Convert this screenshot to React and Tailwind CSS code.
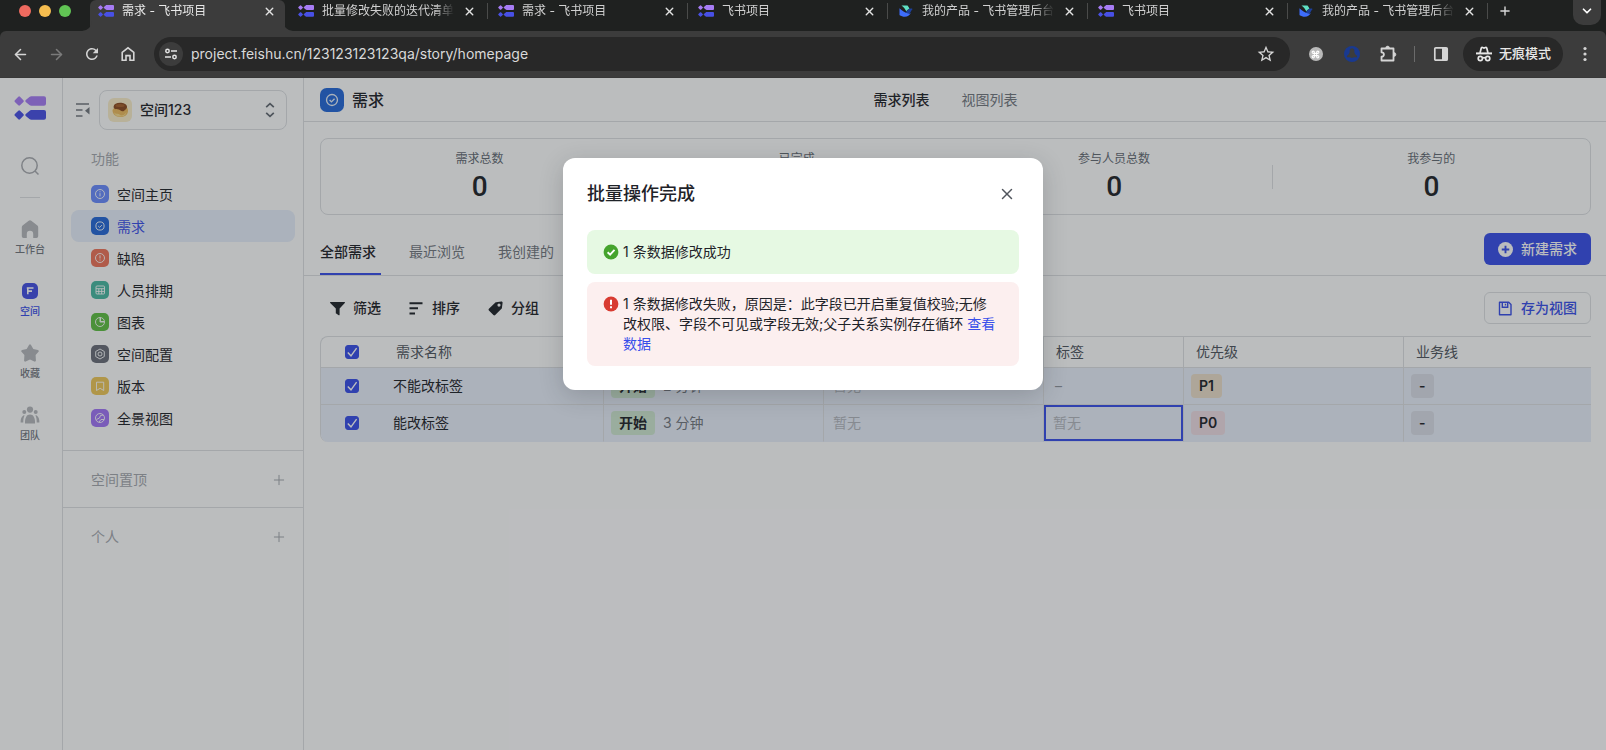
import React from "react";
import { ArrowLeft, ArrowRight, ChevronDown, Command, Plus, X } from "lucide-react";
import { MdRefresh, MdStarBorder } from "react-icons/md";

/* ---------- logos ---------- */

function ProjectLogo({ className }) {
  return (
    <svg viewBox="0 0 32 24" className={className} aria-hidden="true">
      <g fill="#a77cf5">
        <path d="M4.300.8a1.200 1.200 0 0 1 1.700 0l3.400 3.400a1.200 1.200 0 0 1 0 1.700L6 9.300a1.200 1.200 0 0 1-1.700 0L.9 5.900a1.200 1.200 0 0 1 0-1.700z" />
        <path d="M15.400 1c.6-.5 1.200-.8 2-.8H30a2 2 0 0 1 2 2v5.600a2 2 0 0 1-2 2H17.400c-.8 0-1.400-.3-2-.8l-3.600-3a1.200 1.200 0 0 1 0-1.900z" />
      </g>
      <g fill="#4850e6" transform="translate(0 13.900)">
        <path d="M4.300.8a1.200 1.200 0 0 1 1.700 0l3.400 3.400a1.200 1.200 0 0 1 0 1.700L6 9.300a1.200 1.200 0 0 1-1.700 0L.9 5.900a1.200 1.200 0 0 1 0-1.700z" />
        <path d="M15.400 1c.6-.5 1.200-.8 2-.8H30a2 2 0 0 1 2 2v5.600a2 2 0 0 1-2 2H17.400c-.8 0-1.400-.3-2-.8l-3.600-3a1.200 1.200 0 0 1 0-1.900z" />
      </g>
    </svg>
  );
}

function FeishuLogo({ className }) {
  return (
    <svg viewBox="0 0 14 14" className={className} aria-hidden="true">
      <path d="M2.500 1.500h6c1 1 1.700 2.300 2 3.600-1.400.3-2.300 1.200-3.200 2.200C6.200 5 4.600 3 2.500 1.500z" fill="#5fe0c4" />
      <path d="M13.600 4.900c-1.600-.6-3.500-.2-4.800 1L6.500 8.200l3 1.600c1.200-.3 1.900-1.200 2.400-2.300.4-1 .9-1.900 1.700-2.600z" fill="#1c3f9c" />
      <path d="M.5 4.300C3 6.900 6 8.800 9.400 9.600c1 .2 1.800 0 2.500-.5-1.300 2.300-3.400 3.700-6 3.700-2 0-3.900-.6-5.200-1.500-.2-.2-.2-.4-.2-.6z" fill="#3d6dfc" />
    </svg>
  );
}

/* ---------- browser chrome ---------- */

const browserTabs = [
  { title: "需求 - 飞书项目", kind: "project", active: true },
  { title: "批量修改失败的迭代清单", kind: "project" },
  { title: "需求 - 飞书项目", kind: "project" },
  { title: "飞书项目", kind: "project" },
  { title: "我的产品 - 飞书管理后台", kind: "admin" },
  { title: "飞书项目", kind: "project" },
  { title: "我的产品 - 飞书管理后台", kind: "admin" },
];

function Flare({ side }) {
  return (
    <svg
      viewBox="0 0 10 10"
      className={side === "left" ? "absolute bottom-0 -left-2 h-2.5 w-2.5" : "absolute -right-2 bottom-0 h-2.5 w-2.5 -scale-x-100"}
      aria-hidden="true"
    >
      <path d="M10 0v10H0A10 10 0 0 0 10 0z" fill="#3c3c3c" />
    </svg>
  );
}

function BrowserTab({ tab, divider }) {
  return (
    <div className="relative h-[31px] max-w-[200px] min-w-0 flex-1">
      {tab.active && (
        <div className="absolute inset-y-0 right-[3px] left-0.5 rounded-t-md bg-[#3c3c3c]">
          <Flare side="left" />
          <Flare side="right" />
        </div>
      )}
      <div className="relative flex h-[22px] items-center pr-3 pl-2.5">
        {tab.kind === "project" ? (
          <ProjectLogo className="h-3 w-4 shrink-0" />
        ) : (
          <FeishuLogo className="h-3.5 w-4 shrink-0" />
        )}
        <button
          className={
            "ml-2 min-w-0 flex-1 overflow-hidden text-left text-xs leading-5 whitespace-nowrap [mask-image:linear-gradient(to_right,black_84%,transparent_98%)] " +
            (tab.active ? "text-[#e8e8e8]" : "text-[#d0d0d0]")
          }
        >
          {tab.title}
        </button>
        <button aria-label="关闭标签页" className="ml-1.5 shrink-0 text-[#e3e3e3]">
          <X size={13} strokeWidth={2.600} />
        </button>
      </div>
      {divider && <div className="absolute top-[3px] right-0 h-4 w-px bg-[#4a4b4a]" />}
    </div>
  );
}

function BrowserChrome() {
  return (
    <header className="bg-[#1f2120]">
      <div className="flex h-[31px] items-start overflow-hidden pr-[5px] pl-[19px]">
        <div className="flex h-[22px] w-[69px] shrink-0 items-center gap-2">
          <span className="h-3 w-3 rounded-full bg-[#ee6a5f]" />
          <span className="h-3 w-3 rounded-full bg-[#f5bd4f]" />
          <span className="h-3 w-3 rounded-full bg-[#61c454]" />
        </div>
        <div className="flex min-w-0 flex-1">
          {browserTabs.map((tab, i) => (
            <BrowserTab key={i} tab={tab} divider={i > 0} />
          ))}
          <button aria-label="新标签页" className="ml-[7px] flex h-[22px] w-5 shrink-0 items-center justify-center text-[#d8d8d8]">
            <Plus size={14} strokeWidth={2.400} />
          </button>
        </div>
        <button aria-label="搜索标签页" className="flex h-[25px] w-7 shrink-0 justify-center rounded-b-[10px] bg-[#3c3c3c] pt-1 text-white">
          <ChevronDown size={14} strokeWidth={3} />
        </button>
      </div>
      <div className="flex h-[47px] items-center rounded-t-md border-b border-[#383838] bg-[#3c3c3c] pr-[11px] pl-2.5 text-[#d5d5d5]">
        <div className="flex items-center gap-4">
          <button aria-label="后退" className="flex w-5 justify-center"><ArrowLeft size={17} strokeWidth={2.200} /></button>
          <button aria-label="前进" className="flex w-5 justify-center text-[#7b7b7b]"><ArrowRight size={17} strokeWidth={2.200} /></button>
          <button aria-label="刷新" className="flex w-5 justify-center"><MdRefresh size={18} /></button>
          <button aria-label="主页" className="flex w-5 justify-center">
            <svg viewBox="0 0 16 16" width="16" height="16" fill="none" stroke="currentColor" strokeWidth="1.600" aria-hidden="true">
              <path d="M2.200 6.300 8 1.800l5.800 4.500v8H10V9.600H6v4.700H2.200z" />
            </svg>
          </button>
        </div>
        <div className="ml-4 flex h-[34px] min-w-0 flex-1 items-center rounded-full bg-[#282828] pr-3.5 pl-[5px]">
          <button aria-label="查看网站信息" className="flex h-6 w-6 shrink-0 items-center justify-center rounded-full bg-[#3c3c3c]">
            <svg viewBox="0 0 14 14" width="14" height="14" fill="none" stroke="#e3e3e3" strokeWidth="1.500" aria-hidden="true">
              <circle cx="3.500" cy="4" r="1.700" />
              <path d="M7 4h6M1 10h6" />
              <circle cx="10.500" cy="10" r="1.700" />
            </svg>
          </button>
          <input
            type="text"
            aria-label="地址和搜索栏"
            defaultValue="project.feishu.cn/123123123123qa/story/homepage"
            className="ml-2 min-w-0 flex-1 bg-transparent text-sm text-[#d9d9d9] outline-none"
          />
          <button aria-label="收藏此页"><MdStarBorder size={20} /></button>
        </div>
        <div className="flex items-center pl-4">
          <button aria-label="快捷键扩展" className="flex w-5 justify-center">
            <span className="flex h-3.5 w-3.5 items-center justify-center rounded-full bg-[#b9b9b9] text-white">
              <Command size={9} strokeWidth={2.800} />
            </span>
          </button>
          <button aria-label="网络扩展" className="ml-4 flex w-5 justify-center">
            <svg viewBox="0 0 16 16" width="16" height="16" aria-hidden="true">
              <circle cx="8" cy="8" r="8" fill="#19398f" />
              <path d="M8 2.200a2.400 2.400 0 0 1 2.300 3.100c.1 2 .9 3.400 2.400 4.300.8.600.3 1.900-.7 1.900-1.400-.3-2.700-.2-4 .4-1.300-.6-2.600-.7-4-.4-1 0-1.500-1.300-.7-1.900 1.500-.9 2.300-2.300 2.400-4.300A2.400 2.400 0 0 1 8 2.200z" fill="#3c3c3c" />
            </svg>
          </button>
          <button aria-label="扩展程序" className="ml-4 flex w-5 justify-center">
            <svg viewBox="0 0 18 18" width="18" height="18" fill="none" stroke="currentColor" strokeWidth="1.800" strokeLinejoin="round" aria-hidden="true">
              <path d="M2.500 3.500h12v12h-12v-3.800c1.500 0 2.400-.9 2.400-2.200s-.9-2.200-2.400-2.200z" />
              <path d="M6.700 3a1.900 1.900 0 0 1 3.800 0zM15 7.600a1.900 1.900 0 0 1 0 3.800z" fill="currentColor" strokeWidth=".6" />
            </svg>
          </button>
          <span className="ml-4 h-4 w-px bg-[#6b6b6b]" />
          <button aria-label="侧边栏" className="ml-4 flex w-5 justify-center">
            <svg viewBox="0 0 16 16" width="16" height="16" aria-hidden="true">
              <rect x="1.800" y="1.800" width="12.400" height="12.400" rx="1" fill="none" stroke="currentColor" strokeWidth="1.700" />
              <path d="M9 2h5v12H9z" fill="currentColor" />
            </svg>
          </button>
          <button className="ml-3 flex h-[34px] items-center gap-1.5 rounded-full bg-[#282828] px-3 text-[13px] font-medium text-[#e8e8e8]">
            <svg viewBox="0 0 18 18" width="18" height="18" fill="none" stroke="currentColor" strokeWidth="1.700" aria-hidden="true">
              <path d="M5 8 6.200 3.200c.2-.6.700-.9 1.300-.7L9 3l1.500-.5c.6-.2 1.100.1 1.300.7L13 8" />
              <path d="M1 8.400h16" strokeWidth="2" />
              <circle cx="5.300" cy="13.500" r="2.100" />
              <circle cx="12.700" cy="13.500" r="2.100" />
              <path d="M7.400 13.100c1-.5 2.200-.5 3.200 0" />
            </svg>
            无痕模式
          </button>
          <button aria-label="更多" className="ml-3 flex w-5 justify-center">
            <svg viewBox="0 0 4 16" width="4" height="16" fill="currentColor" aria-hidden="true">
              <circle cx="2" cy="2.500" r="1.600" />
              <circle cx="2" cy="8" r="1.600" />
              <circle cx="2" cy="13.500" r="1.600" />
            </svg>
          </button>
        </div>
      </div>
    </header>
  );
}

/* ---------- icon rail ---------- */

const railIcons = {
  home: <path fill="#b6b8bc" d="M8.700.8a2 2 0 0 1 2.600 0l6.100 4.800c.5.400.8 1 .8 1.600v9a1.800 1.800 0 0 1-1.800 1.800h-3.200v-4a3.200 3.200 0 0 0-6.400 0v4H3.600a1.800 1.800 0 0 1-1.800-1.800v-9c0-.6.300-1.200.8-1.600z" />,
  space: (
    <>
      <rect x="2" y="1" width="16" height="16" rx="5" fill="#4450e4" />
      <path d="M6.800 6h6.700M8 9.100h4M7.800 6v6.200" stroke="#fff" strokeWidth="1.600" fill="none" />
    </>
  ),
  star: <path fill="#b6b8bc" d="M9 .9a1.200 1.200 0 0 1 2 0l2.300 4 4.600 1c.9.200 1.200 1.200.6 1.900L15.600 11l.3 5.400c.1.900-.8 1.500-1.600 1.100L10 15.500l-4.300 2c-.8.400-1.700-.2-1.600-1.100L4.400 11 1.500 7.800c-.6-.7-.3-1.700.6-1.900l4.600-1z" />,
  team: (
    <g fill="#b6b8bc">
      <circle cx="10" cy="3.600" r="3.100" />
      <circle cx="4.300" cy="6" r="2" />
      <circle cx="15.700" cy="6" r="2" />
      <path d="M5 17.500c-.3-5.600 1.600-9 5-9s5.300 3.400 5 9z" />
      <path d="M3.700 9.300C1.500 10.500.5 13 .6 16.600h2.700c-.1-2.900.2-5.200 1.300-7.200-.3-.1-.6-.1-.9-.1zM16.300 9.300c2.200 1.200 3.200 3.700 3.100 7.300h-2.700c.1-2.900-.2-5.200-1.300-7.200.3-.1.600-.1.900-.1z" />
    </g>
  ),
};

const railItems = [
  { label: "工作台", icon: "home" },
  { label: "空间", icon: "space", active: true },
  { label: "收藏", icon: "star" },
  { label: "团队", icon: "team" },
];

function Rail() {
  return (
    <nav className="flex w-[63px] shrink-0 flex-col items-center border-r border-[#dee0e3] pt-[18px] pr-0.5">
      <ProjectLogo className="h-6 w-8" />
      <button aria-label="搜索" className="mt-9 flex h-5 items-center">
        <svg viewBox="0 0 20 20" width="20" height="20" fill="none" stroke="#a9abb0" strokeWidth="1.500" aria-hidden="true">
          <circle cx="9.500" cy="9.500" r="7.700" />
          <path d="m15 15 3.500 3.500" />
        </svg>
      </button>
      <div className="mt-[21px] h-px w-5 bg-[#dee0e3]" />
      <div className="mt-[22px] flex flex-col items-center gap-[26px]">
        {railItems.map((item) => (
          <a key={item.label} href="#" className="flex flex-col items-center gap-1">
            <svg viewBox="0 0 20 18" className="h-[18px] w-5" aria-hidden="true">{railIcons[item.icon]}</svg>
            <span className={"text-[10px] leading-3.5 font-medium " + (item.active ? "text-[#384eea]" : "text-[#73777f]")}>{item.label}</span>
          </a>
        ))}
      </div>
    </nav>
  );
}

/* ---------- sidebar ---------- */

const glyphs = {
  info: (
    <>
      <circle cx="9" cy="9" r="4.500" />
      <path d="M9 8.200v3.200M9 6.300v1" />
    </>
  ),
  check: (
    <>
      <circle cx="9" cy="9" r="4.100" />
      <path d="m7.200 9 1.400 1.400 2.300-2.300" />
    </>
  ),
  alert: (
    <>
      <circle cx="9" cy="9" r="4.500" />
      <path d="M9 6.300v3.200M9 10.500v1" />
    </>
  ),
  table: (
    <>
      <rect x="5" y="5" width="8.500" height="8" rx="1" />
      <path d="M5 7.700h8.500M5 10.400h8.500M7.800 7.700V13M10.700 7.700V13" />
    </>
  ),
  pie: (
    <>
      <circle cx="9" cy="9" r="4.500" />
      <path d="M9 4.500V9h4.500" />
      <path d="M9.500 5v3.500h3.500" />
    </>
  ),
  gear: (
    <>
      <path d="m9 4 4.300 2.500v5L9 14l-4.300-2.500v-5z" strokeLinejoin="round" />
      <circle cx="9" cy="9" r="2" />
    </>
  ),
  bookmark: <path d="M5.500 5.200h7.200v8.300L9.100 11.300l-3.600 2.200z" strokeLinejoin="round" />,
  globe: (
    <>
      <circle cx="9" cy="9" r="4.500" />
      <path d="m5.500 10.500 3-1.500 1-2.500 2.800-.5M8 13l2-2.500h3" />
    </>
  ),
};

const features = [
  { label: "空间主页", glyph: "info", color: "#6a8cff" },
  { label: "需求", glyph: "check", color: "#2468d8", active: true },
  { label: "缺陷", glyph: "alert", color: "#f0735a" },
  { label: "人员排期", glyph: "table", color: "#48b9a2" },
  { label: "图表", glyph: "pie", color: "#5fc043" },
  { label: "空间配置", glyph: "gear", color: "#6a6e79" },
  { label: "版本", glyph: "bookmark", color: "#f0c858" },
  { label: "全景视图", glyph: "globe", color: "#a274f8" },
];

function FeatureIcon({ glyph, color, className }) {
  return (
    <svg viewBox="0 0 18 18" className={className} aria-hidden="true">
      <rect width="18" height="18" rx="5" fill={color} />
      <g fill="none" stroke="#fff" strokeOpacity=".9" strokeWidth="1">{glyphs[glyph]}</g>
    </svg>
  );
}

function Sidebar() {
  return (
    <aside className="flex w-[241px] shrink-0 flex-col border-r border-[#dee0e3]">
      <div className="flex items-center gap-2 pt-3 pr-4 pl-[13px]">
        <button aria-label="收起侧边栏">
          <svg viewBox="0 0 15 14" width="15" height="14" aria-hidden="true">
            <path d="M0 1h13M0 7h6.500M0 13h6.500" stroke="#73777f" strokeWidth="1.500" />
            <path d="M13.500 4v7.500L9 7.800z" fill="#73777f" />
          </svg>
        </button>
        <label className="flex h-10 min-w-0 flex-1 items-center rounded-lg border border-[#dee0e3] px-2">
          <svg viewBox="0 0 24 24" className="h-6 w-6 shrink-0" aria-hidden="true">
            <rect width="24" height="24" rx="6" fill="#fbeecb" />
            <path d="M4.500 12c0 4 2.800 7 7.800 7s7.700-2.600 7.700-6.500c0-2-1-3-2-4L6 10z" fill="#eebb5e" />
            <path d="M6 14c2 3 4 1 5.500 2.500S16 18 18.500 14c-1 4-3.500 4.500-6.500 4.500S6.500 17 6 14z" fill="#f8dc8c" />
            <path d="M5.600 8.500C6 6 8.500 4.800 12 4.800s6.500 1.200 7 3.700c.2 1.800-1 2.600-1.800 3.200s-1.400 1.900-2.900 1.600-2-1.500-3.500-1.900-3.500 0-4.500-.9c-.5-.4-.8-1.100-.7-2z" fill="#8c4a20" />
            <ellipse cx="12" cy="7.600" rx="4.500" ry="1.500" fill="#a8612c" />
          </svg>
          <select aria-label="选择空间" className="ml-2 min-w-0 flex-1 appearance-none bg-transparent text-sm font-medium text-[#1f2329] outline-none">
            <option>空间123</option>
          </select>
          <svg viewBox="0 0 16 16" width="16" height="16" fill="none" stroke="#646a73" strokeWidth="1.700" aria-hidden="true">
            <path d="M4.200 5.200 8 1.700l3.800 3.500M4.200 10.800 8 14.300l3.800-3.500" />
          </svg>
        </label>
      </div>
      <h2 className="mt-[18px] pl-7 text-sm leading-[22px] text-[#a5a8ae]">功能</h2>
      <ul className="mt-2 px-2 pb-4">
        {features.map((f) => (
          <li key={f.label}>
            <a
              href="#"
              className={
                "flex h-8 items-center gap-2 rounded-lg pl-5 text-sm leading-5 " +
                (f.active ? "bg-[#e8effc] text-[#384eea]" : "text-[#1f2329]")
              }
            >
              <FeatureIcon glyph={f.glyph} color={f.color} className="h-[18px] w-[18px]" />
              <span className="pt-0.5">{f.label}</span>
            </a>
          </li>
        ))}
      </ul>
      {["空间置顶", "个人"].map((name) => (
        <div key={name} className="flex h-[57px] items-center justify-between border-t border-[#dee0e3] pt-0.5 pr-4 pl-7">
          <h2 className="text-sm text-[#a5a8ae]">{name}</h2>
          <button aria-label={"添加" + name} className="text-[#a5a8ae]">
            <Plus size={16} strokeWidth={1.500} />
          </button>
        </div>
      ))}
    </aside>
  );
}

/* ---------- main content ---------- */

const stats = [
  ["需求总数", 0],
  ["已完成", 0],
  ["参与人员总数", 0],
  ["我参与的", 0],
];

const tools = [
  {
    label: "筛选",
    icon: <path d="M.6 1h13.800c.6 0 .8.7.4 1.100L9.600 7.500v6.200c0 .5-.5.8-.9.500l-2.500-1.600a.8.800 0 0 1-.4-.7V7.500L.2 2.100C-.2 1.700 0 1 .6 1z" />,
  },
  { label: "排序", icon: <path d="M.5 1.200h13v2H.5zM.5 6.300h8.500v2H.5zM.5 11.400h5.500v2H.5z" /> },
  {
    label: "分组",
    icon: <path fillRule="evenodd" d="M8.200 1.200 13.300.5c.8-.1 1.400.5 1.300 1.300l-.7 5.100c0 .3-.2.6-.4.800l-6.300 6.300a1.300 1.300 0 0 1-1.800 0L.9 9.500a1.300 1.300 0 0 1 0-1.800l6.500-6.100c.2-.2.500-.4.800-.4zM11 5.700a1.600 1.600 0 1 0 0-3.200 1.600 1.600 0 0 0 0 3.200z" />,
  },
];

const rows = [
  { name: "不能改标签", age: "2 分钟", owner: "暂无", tag: "–", priority: "P1", line: "-" },
  { name: "能改标签", age: "3 分钟", owner: "暂无", tag: "暂无", priority: "P0", line: "-", editing: true },
];

const priorityColors = { P1: "bg-[#ecdfca]", P0: "bg-[#f0dde4]" };

function CheckBox({ label }) {
  return (
    <span className="grid w-3.5 place-items-center">
      <input
        type="checkbox"
        aria-label={label}
        defaultChecked
        className="col-start-1 row-start-1 h-3.5 w-3.5 appearance-none rounded-[3px] border border-[#384eea] bg-white checked:bg-[#384eea]"
      />
      <svg viewBox="0 0 14 14" className="pointer-events-none col-start-1 row-start-1 h-3.5 w-3.5" fill="none" stroke="#fff" strokeWidth="1.400" aria-hidden="true">
        <path d="m2.800 7.400 3.200 3.400 5.600-7.600" />
      </svg>
    </span>
  );
}

function Chip({ color, children }) {
  return <span className={"inline-flex h-6 items-center rounded px-2 text-sm font-semibold text-[#1f2329] " + color}>{children}</span>;
}

function StoryTable() {
  const cell = "border-b border-l border-[#dee0e3] px-[7px] py-0";
  const head = "border-b border-l border-[#dee0e3] py-0 pr-2 pl-3 text-left font-normal";
  return (
    <div className="ml-4 overflow-hidden rounded-l-lg border-t border-l border-[#dee0e3]">
      <table className="w-full table-fixed border-separate border-spacing-0 text-sm">
        <colgroup>
          <col className="w-[62px]" />
          <col className="w-[220px]" />
          <col className="w-[220px]" />
          <col className="w-[220px]" />
          <col className="w-[140px]" />
          <col className="w-[220px]" />
          <col />
        </colgroup>
        <thead>
          <tr className="h-[31px] text-[#50555d]">
            <th className="border-b border-[#dee0e3] py-0 pr-0 pl-6"><CheckBox label="全选" /></th>
            <th className="border-b border-[#dee0e3] py-0 pr-2 pl-[13px] text-left font-normal">需求名称</th>
            <th className={head}>状态</th>
            <th className={head}>负责人</th>
            <th className={head}>标签</th>
            <th className={head}>优先级</th>
            <th className={head}>业务线</th>
          </tr>
        </thead>
        <tbody>
          {rows.map((r) => (
            <tr key={r.name} className={"h-[37px] bg-[#eaeffb] text-[#1f2329] " + (r.editing ? "[&>td]:border-b-transparent" : "")}>
              <td className="border-b border-[#dee0e3] py-0 pr-0 pl-6"><CheckBox label={r.name} /></td>
              <td className="border-b border-[#dee0e3] px-2.5 py-0">{r.name}</td>
              <td className={cell}>
                <div className="flex items-center gap-2">
                  <Chip color="bg-[#d0e8d2]">开始</Chip>
                  <span className="text-[#73777f]">{r.age}</span>
                </div>
              </td>
              <td className={cell + " text-[#b4b7be]"}><span className="pl-0.5">{r.owner}</span></td>
              <td className={cell + (r.editing ? " shadow-[inset_0_0_0_2px_#384eea]" : "")}>
                <span className={r.editing ? "pl-0.5 text-[#b4b7be]" : "pl-1 text-[#8f959e]"}>{r.tag}</span>
              </td>
              <td className={cell}><Chip color={priorityColors[r.priority]}>{r.priority}</Chip></td>
              <td className={cell}><Chip color="bg-[#dcdfe8]">{r.line}</Chip></td>
            </tr>
          ))}
        </tbody>
      </table>
    </div>
  );
}

function Main() {
  return (
    <main className="flex min-w-0 flex-1 flex-col">
      <div className="grid h-11 grid-cols-[1fr_auto_1fr] items-center border-b border-[#dee0e3] pr-[35px] pl-4">
        <div className="flex items-center gap-2">
          <FeatureIcon glyph="check" color="#2468d8" className="h-6 w-6" />
          <h1 className="text-base font-medium text-[#1f2329]">需求</h1>
        </div>
        <div className="flex gap-8 text-sm">
          <a href="#" className="font-medium text-[#1f2329]">需求列表</a>
          <a href="#" className="text-[#73777f]">视图列表</a>
        </div>
      </div>

      <dl className="mt-4 mr-[15px] ml-4 flex h-[77px] items-center rounded-lg border border-[#dee0e3]">
        {stats.map(([label, value], i) => (
          <React.Fragment key={label}>
            {i > 0 && <div className="-ml-px h-6 w-px shrink-0 bg-[#dee0e3]" aria-hidden="true" />}
            <div className="flex flex-1 flex-col items-center">
              <dt className="text-xs leading-5 text-[#646a73]">{label}</dt>
              <dd className="font-['Roboto',sans-serif] text-[28px] leading-9 font-medium text-[#1f2329]">{value}</dd>
            </div>
          </React.Fragment>
        ))}
      </dl>

      <div className="flex h-[61px] items-stretch justify-between border-b border-[#dee0e3] pr-[15px] pl-4">
        <div className="flex gap-7 pt-4 text-sm">
          <button className="border-b-2 border-[#384eea] pr-[5px] font-medium text-[#1f2329]">全部需求</button>
          <button className="border-b-2 border-transparent pr-[5px] text-[#73777f]">最近浏览</button>
          <button className="border-b-2 border-transparent pr-[5px] text-[#73777f]">我创建的</button>
        </div>
        <button className="mt-[18px] flex h-8 items-center gap-2 rounded-md bg-[#384eea] px-3.5 text-sm font-medium text-white">
          <svg viewBox="0 0 16 16" width="15" height="15" aria-hidden="true">
            <circle cx="8" cy="8" r="8" fill="#fff" />
            <path d="M8 4v8M4 8h8" stroke="#384eea" strokeWidth="2" />
          </svg>
          新建需求
        </button>
      </div>

      <div className="flex h-[60px] items-center justify-between pt-1 pr-[15px] pl-4">
        <div className="flex gap-7 pl-2.5 text-sm font-medium text-[#1f2329]">
          {tools.map((t) => (
            <button key={t.label} className="flex items-center gap-2">
              <svg viewBox="0 0 15 15" width="15" height="15" fill="currentColor" aria-hidden="true">{t.icon}</svg>
              {t.label}
            </button>
          ))}
        </div>
        <button className="flex h-8 items-center gap-2 rounded-md border border-[#dee0e3] px-[13px] text-sm font-medium text-[#384eea]">
          <svg viewBox="0 0 15 15" width="15" height="15" fill="none" stroke="currentColor" strokeWidth="1.400" aria-hidden="true">
            <path d="M1.500 1.300h9.200l2.300 2.300v10.100H1.500z" strokeLinejoin="round" />
            <path d="M4.300 1.500v4.700h5.400V1.500M7.500 2.800v1.800" />
          </svg>
          存为视图
        </button>
      </div>

      <div className="pr-[15px]"><StoryTable /></div>
    </main>
  );
}

/* ---------- dialog ---------- */

function ResultDialog() {
  return (
    <div className="absolute inset-0 flex items-start justify-center bg-[#1f2329]/30 pt-20">
      <section role="dialog" aria-modal="true" aria-labelledby="dialog-title" className="w-full max-w-[480px] rounded-xl bg-white p-6 text-[#1f2329] shadow-[0_6px_24px_rgba(31,35,41,0.2)]">
        <div className="-mt-1.5 flex h-9 items-center justify-between">
          <h2 id="dialog-title" className="text-lg font-medium">批量操作完成</h2>
          <button aria-label="关闭" className="pr-[3px] text-[#50555d]"><X size={18} strokeWidth={2} /></button>
        </div>
        <div className="mt-[18px] flex gap-1 rounded-lg bg-[#e6f9e3] px-4 py-3 text-sm leading-5">
          <svg viewBox="0 0 16 16" className="mt-0.5 h-4 w-4 shrink-0" aria-hidden="true">
            <circle cx="8" cy="8" r="7.400" fill="#45a42d" />
            <path d="m4.600 8.200 2.500 2.400 4.400-4.700" fill="none" stroke="#fff" strokeWidth="1.900" />
          </svg>
          <p>1 条数据修改成功</p>
        </div>
        <div className="mt-2 flex gap-1 rounded-lg bg-[#fcefef] py-3 pr-5 pl-4 text-sm leading-5">
          <svg viewBox="0 0 16 16" className="mt-0.5 h-4 w-4 shrink-0" aria-hidden="true">
            <circle cx="8" cy="8" r="7.400" fill="#d83b31" />
            <path d="M8 3.700v5M8 10.300v2" stroke="#fff" strokeWidth="2" />
          </svg>
          <p className="min-w-0">
            1 条数据修改失败，原因是：此字段已开启重复值校验;无修改权限、字段不可见或字段无效;父子关系实例存在循环{" "}
            <a href="#" className="text-[#384eea]">查看数据</a>
          </p>
        </div>
      </section>
    </div>
  );
}

export default function App() {
  return (
    <div lang="zh-CN" className="flex min-h-screen flex-col bg-white font-['Inter','Noto_Sans_CJK_SC',sans-serif] antialiased">
      <BrowserChrome />
      <div className="relative flex flex-1">
        <Rail />
        <Sidebar />
        <Main />
        <ResultDialog />
      </div>
    </div>
  );
}
